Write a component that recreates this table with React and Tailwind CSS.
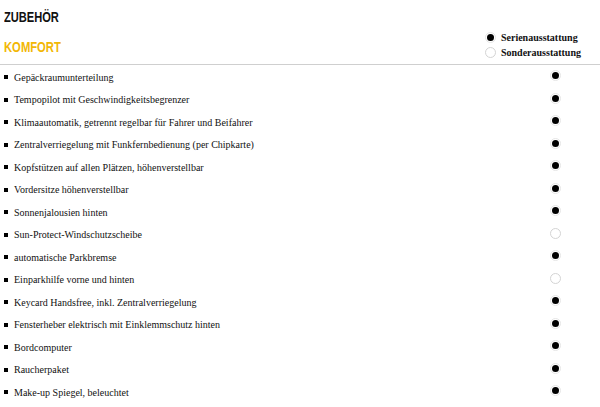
const items = [
  ['Gepäckraumunterteilung', true],
  ['Tempopilot mit Geschwindigkeitsbegrenzer', true],
  ['Klimaautomatik, getrennt regelbar für Fahrer und Beifahrer', true],
  ['Zentralverriegelung mit Funkfernbedienung (per Chipkarte)', true],
  ['Kopfstützen auf allen Plätzen, höhenverstellbar', true],
  ['Vordersitze höhenverstellbar', true],
  ['Sonnenjalousien hinten', true],
  ['Sun-Protect-Windschutzscheibe', false],
  ['automatische Parkbremse', true],
  ['Einparkhilfe vorne und hinten', false],
  ['Keycard Handsfree, inkl. Zentralverriegelung', true],
  ['Fensterheber elektrisch mit Einklemmschutz hinten', true],
  ['Bordcomputer', true],
  ['Raucherpaket', true],
  ['Make-up Spiegel, beleuchtet', true],
]

function Dot({ filled }) {
  if (filled) {
    return (
      <span className="flex h-[11px] w-[11px] items-center justify-center rounded-full border border-[#e6e6e6] bg-white">
        <span className="block h-[7px] w-[7px] rounded-full bg-black" />
      </span>
    )
  }
  return <span className="block h-[11px] w-[11px] rounded-full border border-[#d4d4d4] bg-white" />
}

export default function App() {
  return (
    <div className="h-[407px] w-[600px] overflow-hidden bg-white font-['Liberation_Serif','Times_New_Roman',serif] text-[#111]">
      {/* Header */}
      <div className="flex h-[65px] justify-between border-b border-[#cfcfcf] px-[4px]">
        {/* condensed bold headline, narrowed since no narrow face is installed */}
        <div className="flex flex-col items-start font-['Liberation_Sans','Arial',sans-serif] text-[15px] font-bold leading-[16px]">
          <h1 className="mt-[9px] origin-left scale-x-[0.74] text-[#111]">ZUBEHÖR</h1>
          <h2 className="mt-[14px] origin-left scale-x-[0.75] text-[#f2b705]">KOMFORT</h2>
        </div>
        <div className="mt-[30px] mr-[15px] flex flex-col text-[10px] font-bold leading-[15px]">
          <div className="flex items-center gap-[5px]">
            <Dot filled />
            <span>Serienausstattung</span>
          </div>
          <div className="flex items-center gap-[5px]">
            <Dot filled={false} />
            <span>Sonderausstattung</span>
          </div>
        </div>
      </div>

      {/* List */}
      <ul className="pt-[1px]">
        {items.map(([label, std]) => (
          <li key={label} className="flex h-[22.5px] items-center pl-[4px] pr-[39px] text-[10px]">
            <span className="mr-[6px] block h-[4px] w-[4px] bg-black" />
            <span className="flex-1">{label}</span>
            <span className="-mt-[3px]">
              <Dot filled={std} />
            </span>
          </li>
        ))}
      </ul>
    </div>
  )
}
